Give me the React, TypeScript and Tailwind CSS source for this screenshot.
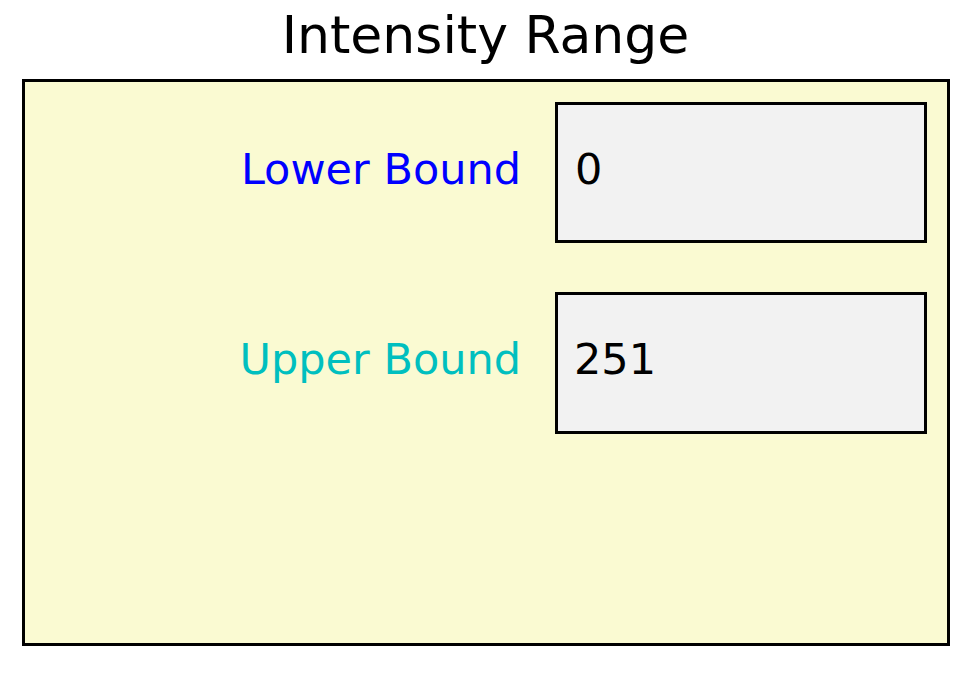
const fields = [
  { label: 'Lower Bound', value: '0', color: 'text-[#0000ff]', height: 'h-[141px]', pad: 'pl-[17px]' },
  { label: 'Upper Bound', value: '251', color: 'text-[#00bfbf]', height: 'h-[142px]', pad: 'pl-[16px]' },
]

export default function App() {
  return (
    <div
      className="w-[971px] h-[673px] bg-white pt-[9px]"
      style={{ fontFamily: '"DejaVu Sans", Verdana, sans-serif' }}
    >
      <h1 className="text-center text-[52px] leading-[52px] text-black">Intensity Range</h1>

      <div className="ml-[22px] mt-[18px] w-[928px] h-[567px] border-[3px] border-black bg-[#fafad2] pt-[20px] pr-[20px]">
        <div className="grid grid-cols-[1fr_372px] gap-x-[34px] gap-y-[49px]">
          {fields.map((f) => (
            <div key={f.label} className="contents">
              <div className={`flex items-center justify-end pb-[7px] ${f.height}`}>
                <span className={`text-[43px] leading-none ${f.color}`}>{f.label}</span>
              </div>
              <div
                className={`flex items-center pb-[7px] border-[3px] border-black bg-[#f2f2f2] ${f.height} ${f.pad}`}
              >
                <span className="text-[43px] leading-none text-black">{f.value}</span>
              </div>
            </div>
          ))}
        </div>
      </div>
    </div>
  )
}
